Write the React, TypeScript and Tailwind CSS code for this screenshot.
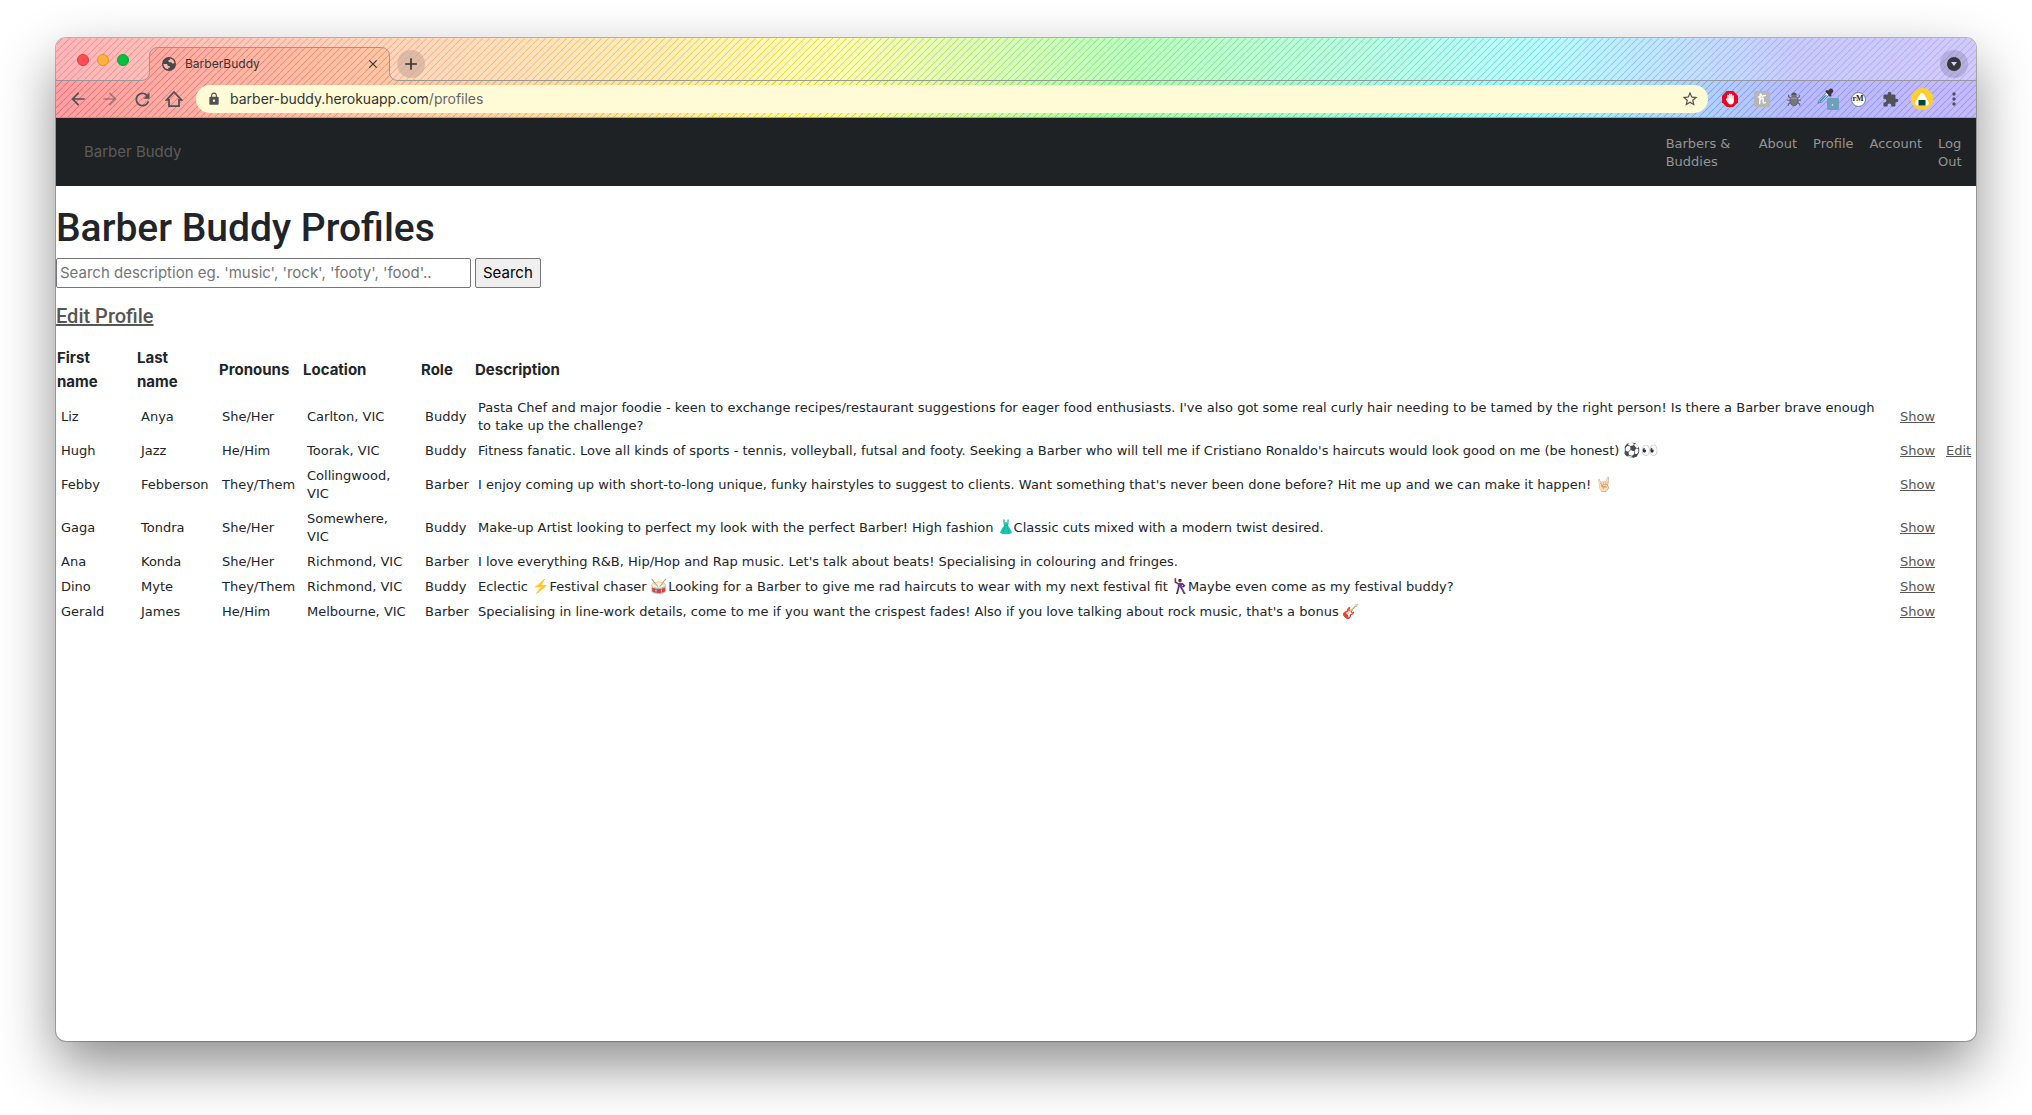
import React from "react";
import {
  MdAdd,
  MdArrowBack,
  MdArrowForward,
  MdClose,
  MdExtension,
  MdLock,
  MdMoreVert,
  MdRefresh,
  MdStarBorder,
} from "react-icons/md";

type Profile = {
  first: string;
  last: string;
  pronouns: string;
  location: string;
  role: string;
  description: React.ReactNode;
  editable?: boolean;
};

function Emoji({ children }: { children: string }) {
  return <span className="font-['Noto_Color_Emoji',sans-serif] text-[14px] leading-none">{children}</span>;
}

function DressIcon() {
  return (
    <svg viewBox="0 0 16 16" className="inline-block size-4 align-[-3px]" role="img" aria-label="dress">
      <path d="M6 .5v3M10 .5v3" stroke="#0fa393" strokeWidth="1.200" />
      <path
        d="M5.600 3c1 .7 1.600.7 2.400.1.800.6 1.400.6 2.400-.1.300 1.500 0 2.600-.6 3.500 1.600 2 3.400 4.500 4.200 7.300-3.600 2-8.400 2-12 0C2.800 11 4.600 8.500 6.200 6.500 5.600 5.600 5.300 4.500 5.600 3Z"
        fill="#1cc7b4"
      />
      <path d="M6.200 6.500h3.600M6.800 8 5 14M9.200 8l1.800 6" stroke="#0fa393" strokeWidth=".7" fill="none" />
    </svg>
  );
}

function DancerIcon() {
  return (
    <svg viewBox="0 0 16 16" className="inline-block size-4 align-[-3px]" role="img" aria-label="man dancing">
      <circle cx="8" cy="2.800" r="1.700" fill="#7a4a2c" />
      <path d="M6.300 2.300C6.500.6 9.500.5 9.700 2.300Z" fill="#2a1a14" />
      <path d="M3.400 1v3.200L6 5.600" fill="none" stroke="#5d2f7d" strokeWidth="1.500" />
      <path d="M5.500 4.900h4.700l-.5 4.300H6Z" fill="#6e3a92" />
      <path d="M10 5.400 12.300 7.600 10.300 9.200M6.700 9 5.200 15M8.800 9l1.600 2.600L12.200 15" fill="none" stroke="#5d2f7d" strokeWidth="1.700" />
      <circle cx="3.400" cy=".9" r=".9" fill="#7a4a2c" />
      <path d="M4 15.300h2M11.500 15.300h2" stroke="#222" />
    </svg>
  );
}

const profiles: Profile[] = [
  {
    first: "Liz",
    last: "Anya",
    pronouns: "She/Her",
    location: "Carlton, VIC",
    role: "Buddy",
    description:
      "Pasta Chef and major foodie - keen to exchange recipes/restaurant suggestions for eager food enthusiasts. I've also got some real curly hair needing to be tamed by the right person! Is there a Barber brave enough to take up the challenge?",
  },
  {
    first: "Hugh",
    last: "Jazz",
    pronouns: "He/Him",
    location: "Toorak, VIC",
    role: "Buddy",
    description: (
      <>
        Fitness fanatic. Love all kinds of sports - tennis, volleyball, futsal and footy. Seeking a Barber who will tell
        me if Cristiano Ronaldo's haircuts would look good on me (be honest) <Emoji>⚽👀</Emoji>
      </>
    ),
    editable: true,
  },
  {
    first: "Febby",
    last: "Febberson",
    pronouns: "They/Them",
    location: "Collingwood, VIC",
    role: "Barber",
    description: (
      <>
        I enjoy coming up with short-to-long unique, funky hairstyles to suggest to clients. Want something that's never
        been done before? Hit me up and we can make it happen! <Emoji>🤘🏻</Emoji>
      </>
    ),
  },
  {
    first: "Gaga",
    last: "Tondra",
    pronouns: "She/Her",
    location: "Somewhere, VIC",
    role: "Buddy",
    description: (
      <>
        Make-up Artist looking to perfect my look with the perfect Barber! High fashion <DressIcon />
        Classic cuts mixed with a modern twist desired.
      </>
    ),
  },
  {
    first: "Ana",
    last: "Konda",
    pronouns: "She/Her",
    location: "Richmond, VIC",
    role: "Barber",
    description:
      "I love everything R&B, Hip/Hop and Rap music. Let's talk about beats! Specialising in colouring and fringes.",
  },
  {
    first: "Dino",
    last: "Myte",
    pronouns: "They/Them",
    location: "Richmond, VIC",
    role: "Buddy",
    description: (
      <>
        Eclectic <Emoji>⚡</Emoji>Festival chaser <Emoji>🥁</Emoji>Looking for a Barber to give me rad haircuts to wear
        with my next festival fit <DancerIcon />
        Maybe even come as my festival buddy?
      </>
    ),
  },
  {
    first: "Gerald",
    last: "James",
    pronouns: "He/Him",
    location: "Melbourne, VIC",
    role: "Barber",
    description: (
      <>
        Specialising in line-work details, come to me if you want the crispest fades! Also if you love talking about
        rock music, that's a bonus <Emoji>🎸</Emoji>
      </>
    ),
  },
];

function HomeIcon() {
  return (
    <svg viewBox="0 0 18 18" className="size-[18px]" fill="none" stroke="currentColor" strokeWidth="1.800" aria-hidden="true">
      <path d="M1.600 9.800 9 2l7.400 7.800H14V16.200H4V9.800Z" />
    </svg>
  );
}

function GlobeIcon() {
  return (
    <svg viewBox="0 0 14 14" className="size-[14px]" aria-hidden="true">
      <circle cx="7" cy="7" r="7" fill="#45484d" />
      <path
        d="M1.400 6.900h2.700c1 0 1.500.6 1.500 1.300 0 .6.500.9 1.200.9.700 0 1 .4 1 1v.7H6.300v1.500C3.600 12 1.500 9.800 1.400 6.900ZM7.900 1.400c2.400.4 4.300 2.300 4.700 4.700-.7.500-1.600.7-2.300.3-.6-.4-.5-1-1.200-1.200H7.500c-.7 0-1.100-.5-1.100-1.100s.5-1 1.100-1h.4Z"
        fill="#fcb9ac"
      />
    </svg>
  );
}

function TabOutline() {
  return (
    <svg viewBox="0 0 258 43" className="absolute inset-0 h-[43px] w-[258px]" aria-hidden="true">
      <path
        d="M0 0H258V42.5H257.5a8 8 0 0 1-8-8V17.500a8 8 0 0 0-8-8H17.500a8 8 0 0 0-8 8V34.500a8 8 0 0 1-8 8H0Z"
        fill="#fff"
        fillOpacity=".24"
      />
      <path
        d="M258 42.5H257.5a8 8 0 0 1-8-8V17.500a8 8 0 0 0-8-8H17.500a8 8 0 0 0-8 8V34.500a8 8 0 0 1-8 8H0"
        fill="none"
        stroke="#96989a"
      />
    </svg>
  );
}

function AdblockIcon() {
  return (
    <svg viewBox="0 0 16 16" className="size-4" aria-hidden="true">
      <path d="M4.700 0h6.600L16 4.700v6.600L11.300 16H4.700L0 11.300V4.700Z" fill="#e8081e" />
      <g stroke="#fff" strokeLinecap="round" strokeWidth="1.500">
        <path d="M6 8V4.200M7.700 8V3.200M9.400 8V3.500M11.100 8V5" />
        <path d="M4.600 8.200 6 10.600" />
      </g>
      <path d="M5.300 7.500h6.550v2.700c0 2-1.200 3.200-3.100 3.200-1.600 0-2.500-.8-3.100-2.300Z" fill="#fff" />
    </svg>
  );
}

function HoneyIcon() {
  return (
    <svg viewBox="0 0 16 16" className="size-4" aria-hidden="true">
      <rect width="16" height="16" rx="2" fill="#b7b5b6" />
      <path
        d="M4.200 6.200c1.800-.4 3-1.600 3-2.800 0-1-1-.7-1.100.6L5.700 12.500M5.800 9.800c.7-1.800 1.500-2.800 2.600-2.800 1.300 0 .7 2 .6 3.500 0 1.700 1.100 2.100 2.300 1M7.800 4.800c1.300.4 2.500.3 3.600-.5"
        fill="none"
        stroke="#fff"
        strokeWidth="1.300"
        strokeLinecap="round"
      />
    </svg>
  );
}

function BugIcon() {
  return (
    <svg viewBox="0 0 16 16" className="size-4" aria-hidden="true">
      <g fill="none" stroke="#66666c" strokeWidth="1.100">
        <path d="M4.500 7 2.600 5.600V3.800M11.500 7l1.900-1.400V3.800M4 9.300H1M12 9.300h3M4.600 11.500 2.300 13v1.800M11.400 11.500l2.300 1.500v1.800" />
      </g>
      <path d="M5.200 4.600a2.800 3.200 0 0 1 5.600 0Z" fill="#55555a" />
      <ellipse cx="8" cy="9.800" rx="4.100" ry="5" fill="#77777b" stroke="#55555a" strokeWidth=".7" />
      <path d="M4.600 7.200h6.800" stroke="#a0a0a4" />
    </svg>
  );
}

function DropperIcon() {
  return (
    <svg viewBox="0 0 22 22" className="size-[22px]" aria-hidden="true">
      <path d="m1 15.200 1.200-3.200L10 4.200l2.400 2.400-7.800 7.500Z" fill="#eef4f8" stroke="#5b6570" strokeWidth=".8" />
      <path d="m2 14.400 1-2.400 4.700-4.700h2.600l-5.900 6Z" fill="#2c9bd6" />
      <path d="m8.200 3.200 1.500-1.200 1.500.6 1.500-1.600c1.500-1.600 4.700.8 3.200 3.200L14.200 6l.4 1.500-1.600 1.300Z" fill="#38383c" />
      <rect x="10" y="10" width="12" height="12" rx="1.500" fill="#6e9fbd" />
      <circle cx="15.500" cy="17" r=".8" fill="#fff" />
    </svg>
  );
}

function RiceBallAvatar() {
  return (
    <svg viewBox="0 0 22 22" className="size-[22px]" aria-hidden="true">
      <circle cx="11" cy="11" r="11" fill="#ffcf30" />
      <path d="M9.300 5.800c.8-1.200 2.600-1.200 3.400 0l4.400 7.400c1.300 2.300.5 4.300-1.800 4.300H6.700c-2.300 0-3.100-2-1.800-4.300Z" fill="#fff" />
      <rect x="7.500" y="12" width="7" height="5.500" rx=".5" fill="#00473e" />
    </svg>
  );
}

const iconButton = "grid size-8 shrink-0 place-items-center text-[#505256]";

function BrowserChrome() {
  return (
    <header className="relative isolate bg-[linear-gradient(90deg,#ffa0a4_0%,#ffcfa8_20%,#fffaa6_40%,#a6ffac_56%,#a4fbff_77%,#b9baff_91%,#c4baff_100%)]">
      {/* diagonal hatching over the rainbow theme */}
      <div className="absolute inset-0 -z-10 bg-[linear-gradient(90deg,#f0707a_0%,#f0a870_22%,#e6d600_38%,#7ade70_55%,#5ccfd8_77%,#9898ee_91%,#a898ec_100%)] [mask-image:linear-gradient(135deg,transparent_41%,#000_50%,transparent_59%)] [mask-size:7px_7px]" />
      <div className="flex h-[43px]">
        <div className="flex w-[84px] items-center gap-2 border-b border-[#96989a] bg-white/24 pt-[2px] pl-[21px]">
          <button aria-label="Close window" className="size-3 rounded-full border border-[#e0383e] bg-[#ff4f50]" />
          <button aria-label="Minimise window" className="size-3 rounded-full border border-[#dd9630] bg-[#ffb13a]" />
          <button aria-label="Zoom window" className="size-3 rounded-full border border-[#0ba036] bg-[#00c140]" />
        </div>
        <div className="relative w-[258px]">
          <TabOutline />
          <div className="relative flex h-full items-center pt-[9px] pr-[18px] pl-[22px] text-xs text-[#35373a]">
            <GlobeIcon />
            <span className="ml-[9px] grow">BarberBuddy</span>
            <button aria-label="Close tab">
              <MdClose className="size-[14px]" />
            </button>
          </div>
        </div>
        <div className="flex grow items-center justify-between border-b border-[#96989a] bg-white/24 pt-[10px] pr-2">
          <button aria-label="New tab" className="-ml-px grid size-7 place-items-center rounded-full bg-[#c8a898]/60 text-[#333]">
            <MdAdd className="size-[20px]" />
          </button>
          <button aria-label="Search tabs" className="grid size-7 place-items-center rounded-full bg-[#66607a]/25">
            <span className="grid size-[14px] place-items-center rounded-full bg-[#35373a]">
              <svg viewBox="0 0 6 4" className="h-1 w-[6px]" aria-hidden="true">
                <path d="M0 0h6L3 4Z" fill="#d8d2ff" />
              </svg>
            </span>
          </button>
        </div>
      </div>
      <div className="flex h-[37px] items-center border-b border-[#a5a48a] px-[6px]">
        <button aria-label="Back" className={iconButton}>
          <MdArrowBack className="size-5" />
        </button>
        <button aria-label="Forward" className="grid size-8 shrink-0 place-items-center text-[#505256]/50">
          <MdArrowForward className="size-5" />
        </button>
        <button aria-label="Reload" className={iconButton}>
          <MdRefresh className="size-[21px]" />
        </button>
        <button aria-label="Home" className={iconButton}>
          <HomeIcon />
        </button>
        <div className="mx-[6px] flex h-7 grow items-center rounded-full bg-[#fffbd6] pr-[9px] pl-[11px]">
          <MdLock className="size-[14px] text-[#505256]" />
          <a href="#profiles" className="ml-[9px] grow text-sm text-[#333]">
            barber-buddy.herokuapp.com<span className="text-[#666]">/profiles</span>
          </a>
          <button aria-label="Bookmark this page">
            <MdStarBorder className="size-[18px] text-[#505256]" />
          </button>
        </div>
        <button aria-label="Ad blocker" className={iconButton}>
          <AdblockIcon />
        </button>
        <button aria-label="Coupons" className={iconButton}>
          <HoneyIcon />
        </button>
        <button aria-label="Debugger" className={iconButton}>
          <BugIcon />
        </button>
        <button aria-label="Colour picker" className="grid size-8 shrink-0 place-items-center pl-1">
          <DropperIcon />
        </button>
        <button aria-label="rM" className={iconButton}>
          <span className="grid size-[15px] place-items-center rounded-full border border-[#77777c] bg-white font-['Liberation_Serif',serif] text-[8px] leading-none font-bold text-[#222]">
            rM
          </span>
        </button>
        <button aria-label="Extensions" className={iconButton}>
          <MdExtension className="size-[17px]" />
        </button>
        <button aria-label="Account" className={iconButton}>
          <RiceBallAvatar />
        </button>
        <button aria-label="Menu" className={iconButton}>
          <MdMoreVert className="size-5" />
        </button>
      </div>
    </header>
  );
}

const cell = "px-1 pt-1 pb-[3px]";
const nameCell = "pt-1 pr-1 pb-[3px] pl-[5px]";
const linkCell = "pt-1 pb-[3px] pl-[6px]";
const rowLink = "text-[#555] underline";

export default function App() {
  return (
    <div className="flex min-h-screen flex-col bg-white px-[56px] pt-[38px] pb-[74px] font-[Inter,sans-serif] text-[#212529]">
      <div className="flex grow flex-col overflow-hidden rounded-[10px] bg-white shadow-[0_0_0_1px_rgba(0,0,0,0.25),0_24px_56px_rgba(0,0,0,0.45)]">
        <BrowserChrome />
        <nav className="flex h-[68px] items-center justify-between bg-[#1f2224] pr-3 pl-7">
          <a href="#home" className="text-[15px] text-[#5c5c5c]">
            Barber Buddy
          </a>
          <div className="flex gap-4 self-start pt-[17px] font-['DejaVu_Sans',sans-serif] text-[13px] leading-[18px] text-[#949596]">
            <a href="#barbers" className="w-[77px]">
              Barbers &amp; Buddies
            </a>
            <a href="#about">About</a>
            <a href="#profile">Profile</a>
            <a href="#account">Account</a>
            <a href="#logout" className="w-[26px]">
              Log Out
            </a>
          </div>
        </nav>
        <main>
          <h1 className="mt-[18px] mb-[6px] font-[Roboto,sans-serif] text-[39px] leading-[48px] font-medium">
            Barber Buddy Profiles
          </h1>
          <form className="flex h-[30px] gap-1" onSubmit={(e) => e.preventDefault()}>
            <input
              aria-label="Search description"
              placeholder="Search description eg. 'music', 'rock', 'footy', 'food'.."
              className="w-[415px] rounded-xs border border-[#767676] px-[3px] text-[15px] placeholder:text-[#757575]"
            />
            <button className="rounded-xs border border-[#767676] bg-[#efefef] px-[7px] text-[15px] text-black">
              Search
            </button>
          </form>
          <h2 className="mt-4 font-[Roboto,sans-serif] text-xl leading-6 font-medium">
            <a href="#edit" className="text-[#555] underline">
              Edit Profile
            </a>
          </h2>
          <table className="mt-4 w-full table-fixed border-collapse text-left">
            <colgroup>
              <col className="w-[80px]" />
              <col className="w-[82px]" />
              <col className="w-[84px]" />
              <col className="w-[118px]" />
              <col className="w-[54px]" />
              <col />
              <col className="w-[46px]" />
              <col className="w-[36px]" />
            </colgroup>
            <thead>
              <tr className="h-[51px] text-[15px] leading-6">
                <th className="pr-5 pl-px font-bold">First name</th>
                <th className="pr-5 pl-px font-bold">Last name</th>
                <th className="pl-px font-bold">Pronouns</th>
                <th className="pl-px font-bold">Location</th>
                <th className="pl-px font-bold">Role</th>
                <th className="pl-px font-bold">Description</th>
                <td />
                <td />
              </tr>
            </thead>
            <tbody className="font-['DejaVu_Sans',sans-serif] text-[13px] leading-[18px]">
              {profiles.map((p) => (
                <tr key={p.first}>
                  <td className={nameCell}>{p.first}</td>
                  <td className={nameCell}>{p.last}</td>
                  <td className={cell}>{p.pronouns}</td>
                  <td className="pt-1 pr-2 pb-[3px] pl-[5px]">{p.location}</td>
                  <td className="pt-1 pb-[3px] pl-[5px]">{p.role}</td>
                  <td className={cell}>{p.description}</td>
                  <td className={linkCell}>
                    <a href="#show" className={rowLink}>
                      Show
                    </a>
                  </td>
                  <td className={linkCell}>
                    {p.editable && (
                      <a href="#edit" className={rowLink}>
                        Edit
                      </a>
                    )}
                  </td>
                </tr>
              ))}
            </tbody>
          </table>
        </main>
      </div>
    </div>
  );
}
